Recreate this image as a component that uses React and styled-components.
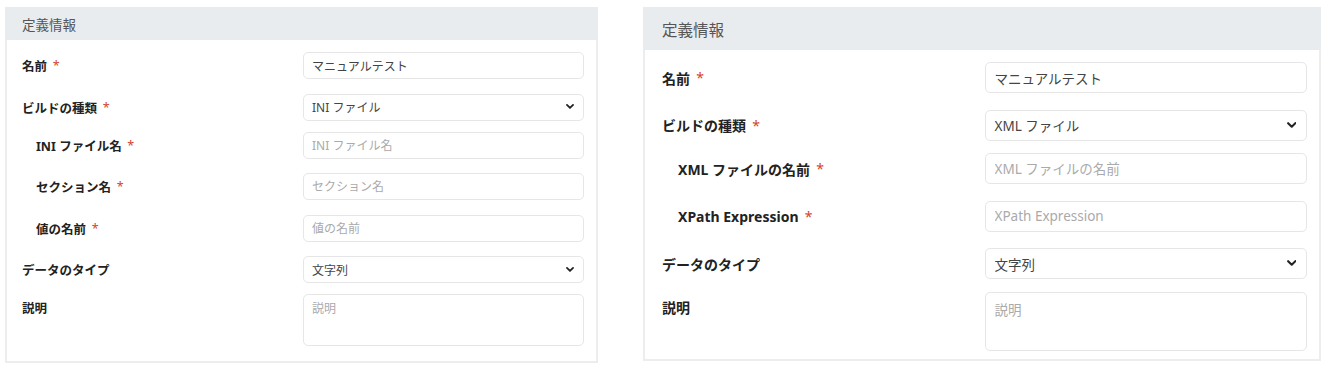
import React from 'react';
import styled, { createGlobalStyle } from 'styled-components';

const GlobalStyle = createGlobalStyle`
	body {
		margin: 0;
		background: #fff;
		font-family: 'Noto Sans', 'Noto Sans CJK JP', sans-serif;
	}
`;

// two captures of the same form, at two zoom levels
const small = {
	width: 593,
	height: 356,
	headerH: 31,
	headerFont: 13.5,
	padL: 15,
	padB: 15,
	labelFont: 12.5,
	inputFont: 12,
	controlH: 27,
	textareaH: 52,
	gap: 14.5,
	tightGap: 11,
	indent: 14,
	textPad: 8,
	areaPadTop: 4,
	chevron: 8,
};

const large = {
	width: 678,
	height: 354,
	headerH: 41,
	headerFont: 15.5,
	padL: 17,
	padB: 8,
	labelFont: 14,
	inputFont: 13.5,
	controlH: 31,
	textareaH: 59,
	gap: 16.5,
	tightGap: 12.5,
	indent: 16,
	textPad: 9,
	areaPadTop: 6,
	chevron: 9.5,
};

export default function App() {
	return (
		<>
			<GlobalStyle />
			<Page>
				<DefinitionPanel
					s={small}
					buildType="INI ファイル"
					fields={[
						{ label: 'INI ファイル名', placeholder: 'INI ファイル名' },
						{ label: 'セクション名', placeholder: 'セクション名' },
						{ label: '値の名前', placeholder: '値の名前' },
					]}
				/>
				<DefinitionPanel
					s={large}
					buildType="XML ファイル"
					fields={[
						{ label: 'XML ファイルの名前', placeholder: 'XML ファイルの名前' },
						{ label: 'XPath Expression', placeholder: 'XPath Expression' },
					]}
				/>
			</Page>
		</>
	);
}

function DefinitionPanel({ s, buildType, fields }) {
	return (
		<Panel $s={s}>
			<Header $s={s}>定義情報</Header>
			<Body $s={s}>
				<Row $s={s}>
					<Label $s={s}>
						名前<Required>*</Required>
					</Label>
					<Input $s={s} readOnly value="マニュアルテスト" />
				</Row>
				<Row $s={s} $tight>
					<Label $s={s}>
						ビルドの種類<Required>*</Required>
					</Label>
					<Select $s={s}>
						{buildType}
						<Chevron size={s.chevron} />
					</Select>
				</Row>
				{fields.map((f) => (
					<Row $s={s} key={f.label}>
						<Label $s={s} $nested>
							{f.label}
							<Required>*</Required>
						</Label>
						<Input $s={s} readOnly placeholder={f.placeholder} />
					</Row>
				))}
				<Row $s={s} $tight>
					<Label $s={s}>データのタイプ</Label>
					<Select $s={s}>
						文字列
						<Chevron size={s.chevron} />
					</Select>
				</Row>
				<Row $s={s} $last>
					<Label $s={s}>説明</Label>
					<TextArea $s={s} readOnly placeholder="説明" />
				</Row>
			</Body>
		</Panel>
	);
}

function Chevron({ size }) {
	return (
		<svg width={size} height={size * 0.65} viewBox="0 0 10 6.5">
			<polyline
				points="1.2,1.2 5,5 8.8,1.2"
				fill="none"
				stroke="#222"
				strokeWidth="2.2"
				strokeLinecap="round"
				strokeLinejoin="round"
			/>
		</svg>
	);
}

const Page = styled.div`
	display: flex;
	align-items: flex-start;
	gap: 45px;
	padding: 7px 0 0 5px;
`;

const Panel = styled.section`
	box-sizing: border-box;
	width: ${(p) => p.$s.width}px;
	height: ${(p) => p.$s.height}px;
	border: 2px solid #ededed;
	border-top: none;
	background: #fff;
	display: flex;
	flex-direction: column;
`;

const Header = styled.div`
	height: ${(p) => p.$s.headerH + 2}px;
	display: flex;
	align-items: center;
	margin: 0 -2px;
	padding-left: ${(p) => p.$s.padL + 2}px;
	background: #e9ecee;
	color: #555;
	font-size: ${(p) => p.$s.headerFont}px;
	font-family: 'Noto Sans CJK JP', sans-serif;
`;

const Body = styled.div`
	padding: 12px 12px ${(p) => p.$s.padB}px ${(p) => p.$s.padL}px;
	display: flex;
	flex-direction: column;
`;

const Row = styled.div`
	display: grid;
	grid-template-columns: 1fr 1fr;
	align-items: start;
	margin-bottom: ${(p) => (p.$last ? 0 : p.$tight ? p.$s.tightGap : p.$s.gap)}px;
`;

const Label = styled.div`
	height: ${(p) => p.$s.controlH}px;
	display: flex;
	align-items: center;
	padding-left: ${(p) => (p.$nested ? p.$s.indent : 0)}px;
	font-size: ${(p) => p.$s.labelFont}px;
	font-weight: 700;
	color: #222;
	white-space: nowrap;
`;

const Required = styled.span`
	color: #d2432f;
	margin-left: 0.45em;
	font-weight: 400;
`;

const controlBase = (p) => `
	box-sizing: border-box;
	width: 100%;
	margin: 0;
	border: 1px solid #e6e6e6;
	border-radius: 5px;
	background: #fff;
	color: #444;
	font-family: 'Noto Sans', 'Noto Sans CJK JP', sans-serif;
	font-size: ${p.$s.inputFont}px;
	padding: 0 ${p.$s.textPad}px;
	outline: none;
`;

const Input = styled.input`
	${controlBase}
	height: ${(p) => p.$s.controlH}px;

	&::placeholder {
		color: #aaa;
	}
`;

const Select = styled.div`
	${controlBase}
	height: ${(p) => p.$s.controlH}px;
	display: flex;
	align-items: center;
	justify-content: space-between;
	padding-right: ${(p) => p.$s.textPad + 1}px;
`;

const TextArea = styled.textarea`
	${controlBase}
	height: ${(p) => p.$s.textareaH}px;
	padding-top: ${(p) => p.$s.areaPadTop}px;
	resize: none;
	display: block;

	&::placeholder {
		color: #aaa;
	}
`;
